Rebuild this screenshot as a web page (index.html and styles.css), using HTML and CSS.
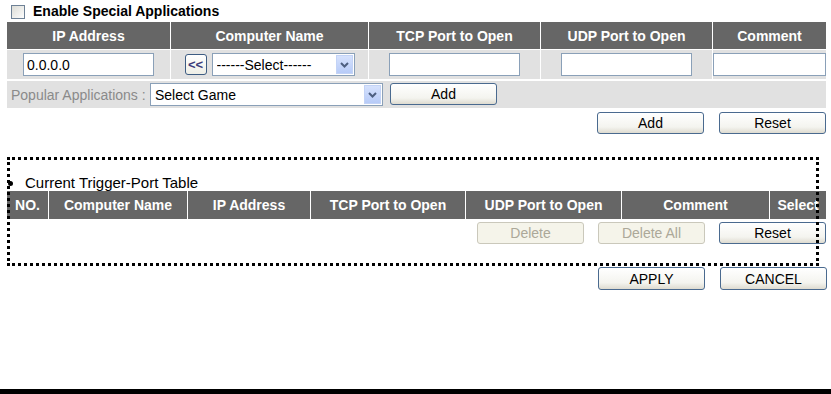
FILE: index.html
```html
<!DOCTYPE html>
<html lang="en">
<head>
    <meta charset="UTF-8">
    <title>Special Applications</title>
    <link rel="stylesheet" href="styles.css">
</head>
<body>
    <div class="page">
        <label class="enable">
            <input type="checkbox" class="check"> Enable Special Applications
        </label>

        <table class="grid app-table">
            <tr class="head">
                <th class="c-ip">IP Address</th>
                <th class="c-name">Computer Name</th>
                <th class="c-tcp">TCP Port to Open</th>
                <th class="c-udp">UDP Port to Open</th>
                <th class="c-comment">Comment</th>
            </tr>
            <tr class="inputs">
                <td><input type="text" class="field" value="0.0.0.0"></td>
                <td>
                    <div class="name-pick">
                        <button type="button" class="copy-btn">&lt;&lt;</button>
                        <span class="select-box sel-name">
                            <select><option>------Select------</option></select>
                            <span class="arrow"><svg width="9" height="6" viewBox="0 0 9 6"><path d="M1 1 L4.5 4.5 L8 1" fill="none" stroke="#4d5f80" stroke-width="2"/></svg></span>
                        </span>
                    </div>
                </td>
                <td><input type="text" class="field"></td>
                <td><input type="text" class="field"></td>
                <td><input type="text" class="field field-comment"></td>
            </tr>
        </table>

        <div class="popular">
            <span class="popular-label">Popular Applications :</span>
            <span class="select-box sel-game">
                <select><option>Select Game</option></select>
                <span class="arrow"><svg width="9" height="6" viewBox="0 0 9 6"><path d="M1 1 L4.5 4.5 L8 1" fill="none" stroke="#4d5f80" stroke-width="2"/></svg></span>
            </span>
            <button type="button" class="btn">Add</button>
        </div>

        <div class="actions">
            <button type="button" class="btn">Add</button>
            <button type="button" class="btn">Reset</button>
        </div>

        <div class="trigger-title"><span class="bullet"></span>Current Trigger-Port Table</div>

        <table class="grid trigger-table">
            <tr class="head">
                <th class="t-no">NO.</th>
                <th class="t-name">Computer Name</th>
                <th class="t-ip">IP Address</th>
                <th class="t-tcp">TCP Port to Open</th>
                <th class="t-udp">UDP Port to Open</th>
                <th class="t-comment">Comment</th>
                <th class="t-select">Select</th>
            </tr>
        </table>

        <div class="actions actions-delete">
            <button type="button" class="btn" disabled>Delete</button>
            <button type="button" class="btn" disabled>Delete All</button>
            <button type="button" class="btn">Reset</button>
        </div>

        <div class="actions actions-apply">
            <button type="button" class="btn">APPLY</button>
            <button type="button" class="btn">CANCEL</button>
        </div>

        <!-- dotted highlight drawn over the trigger table -->
        <div class="highlight"></div>
    </div>

    <div class="bottom-bar"></div>
</body>
</html>
```

FILE: styles.css
```css
html, body {
    height: 100%;
}
body {
    margin: 0;
    font-family: "Liberation Sans", Arial, sans-serif;
    font-size: 14px;
    color: #000;
    background: #fff;
    display: flex;
    flex-direction: column;
}
.page {
    position: relative;
    width: 821px;
    padding-left: 6px;
}
.enable {
    display: flex;
    align-items: center;
    height: 21px;
    font-weight: bold;
    font-size: 14px;
    gap: 8px;
    padding-left: 5px;
}
.check {
    appearance: none;
    margin: 0;
    width: 14px;
    height: 14px;
    border: 1px solid #6e8196;
    background: linear-gradient(135deg, #dcdcd6, #fdfdfd);
    box-sizing: border-box;
    position: relative;
    top: 1px;
}
.grid {
    border-collapse: separate;
    border-spacing: 1px;
    width: 821px;
    table-layout: fixed;
}
.grid th {
    background-color: #666666;
    color: #fff;
    font-weight: bold;
    font-size: 14px;
    padding: 0;
    text-align: center;
    white-space: nowrap;
    overflow: hidden;
}
.app-table .head th {
    height: 27px;
}
.c-ip { width: 163px; }
.c-name { width: 197px; }
.c-tcp { width: 171px; }
.c-udp { width: 171px; }
.c-comment { width: 113px; }
.inputs td {
    background-color: #e1e1e1;
    height: 29px;
    padding: 0;
    text-align: center;
    vertical-align: middle;
}
.field {
    box-sizing: border-box;
    width: 131px;
    height: 23px;
    border: 1px solid #8aa0b8;
    background: #fff;
    font-family: "Liberation Sans", Arial, sans-serif;
    font-size: 14px;
    padding: 0 3px;
    margin: 0;
    vertical-align: middle;
}
.field-comment {
    width: 113px;
}
.name-pick {
    display: flex;
    justify-content: center;
    align-items: center;
    gap: 5px;
}
.copy-btn {
    box-sizing: border-box;
    width: 22px;
    height: 21px;
    padding: 0;
    border: 1px solid #3d5c82;
    border-radius: 3px;
    background: linear-gradient(#ffffff, #eeeee6);
    color: #3b3b7a;
    font-family: "Liberation Sans", Arial, sans-serif;
    font-weight: bold;
    font-size: 13px;
}
.select-box {
    box-sizing: border-box;
    display: inline-flex;
    align-items: stretch;
    height: 23px;
    border: 1px solid #8aa0b8;
    background: #fff;
    padding: 1px;
}
.select-box select {
    appearance: none;
    flex: 1;
    border: none;
    background: transparent;
    font-family: "Liberation Sans", Arial, sans-serif;
    font-size: 14px;
    color: #000;
    padding: 0 3px;
    margin: 0;
    outline: none;
}
.sel-name {
    width: 143px;
}
.sel-game {
    width: 233px;
}
.arrow {
    width: 17px;
    display: flex;
    align-items: center;
    justify-content: center;
    background: linear-gradient(#d6e2fd, #b7cbf8);
    border: 1px solid #c3d3f6;
    box-sizing: border-box;
}
.popular {
    display: flex;
    align-items: center;
    height: 27px;
    margin: 1px 0 0 1px;
    width: 819px;
    background-color: #e1e1e1;
}
.popular-label {
    color: #8a8a8a;
    padding-left: 4px;
    width: 139px;
}
.popular .btn {
    margin-left: 7px;
    height: 22px;
    position: relative;
    top: -1px;
}
.btn {
    box-sizing: border-box;
    width: 107px;
    height: 22px;
    padding: 0;
    border: 1px solid #4a6a8f;
    border-radius: 3px;
    background: linear-gradient(#ffffff, #f4f4ef 70%, #dedbd0);
    color: #000;
    font-family: "Liberation Sans", Arial, sans-serif;
    font-size: 14px;
}
.btn:disabled {
    color: #aca899;
    border-color: #cac8bb;
    background: #f5f4ea;
}
.actions {
    display: flex;
    justify-content: flex-end;
    gap: 15px;
    padding-right: 1px;
    margin-top: 4px;
}
.trigger-title {
    display: flex;
    align-items: center;
    height: 16px;
    margin-top: 40px;
    font-size: 15px;
}
.bullet {
    position: relative;
    z-index: 1;
    width: 5px;
    height: 5px;
    border-radius: 50%;
    background: #000;
    margin: 2px 12px 0 2px;
}
.trigger-table .head th {
    height: 28px;
}
.t-no { width: 41px; }
.t-name { width: 138px; }
.t-ip { width: 122px; }
.t-tcp { width: 154px; }
.t-udp { width: 155px; }
.t-comment { width: 147px; }
.t-select { width: 56px; }
.actions-delete {
    margin-top: 2px;
    gap: 14px;
}
.actions-apply {
    margin-top: 23px;
    padding-right: 0;
}
.actions-apply .btn {
    height: 23px;
}
.highlight {
    position: absolute;
    left: 7px;
    top: 157px;
    width: 812px;
    height: 109px;
    box-sizing: border-box;
    border: 3px dotted #000;
    pointer-events: none;
}
.bottom-bar {
    margin-top: auto;
    height: 5px;
    background: #000;
}
```
